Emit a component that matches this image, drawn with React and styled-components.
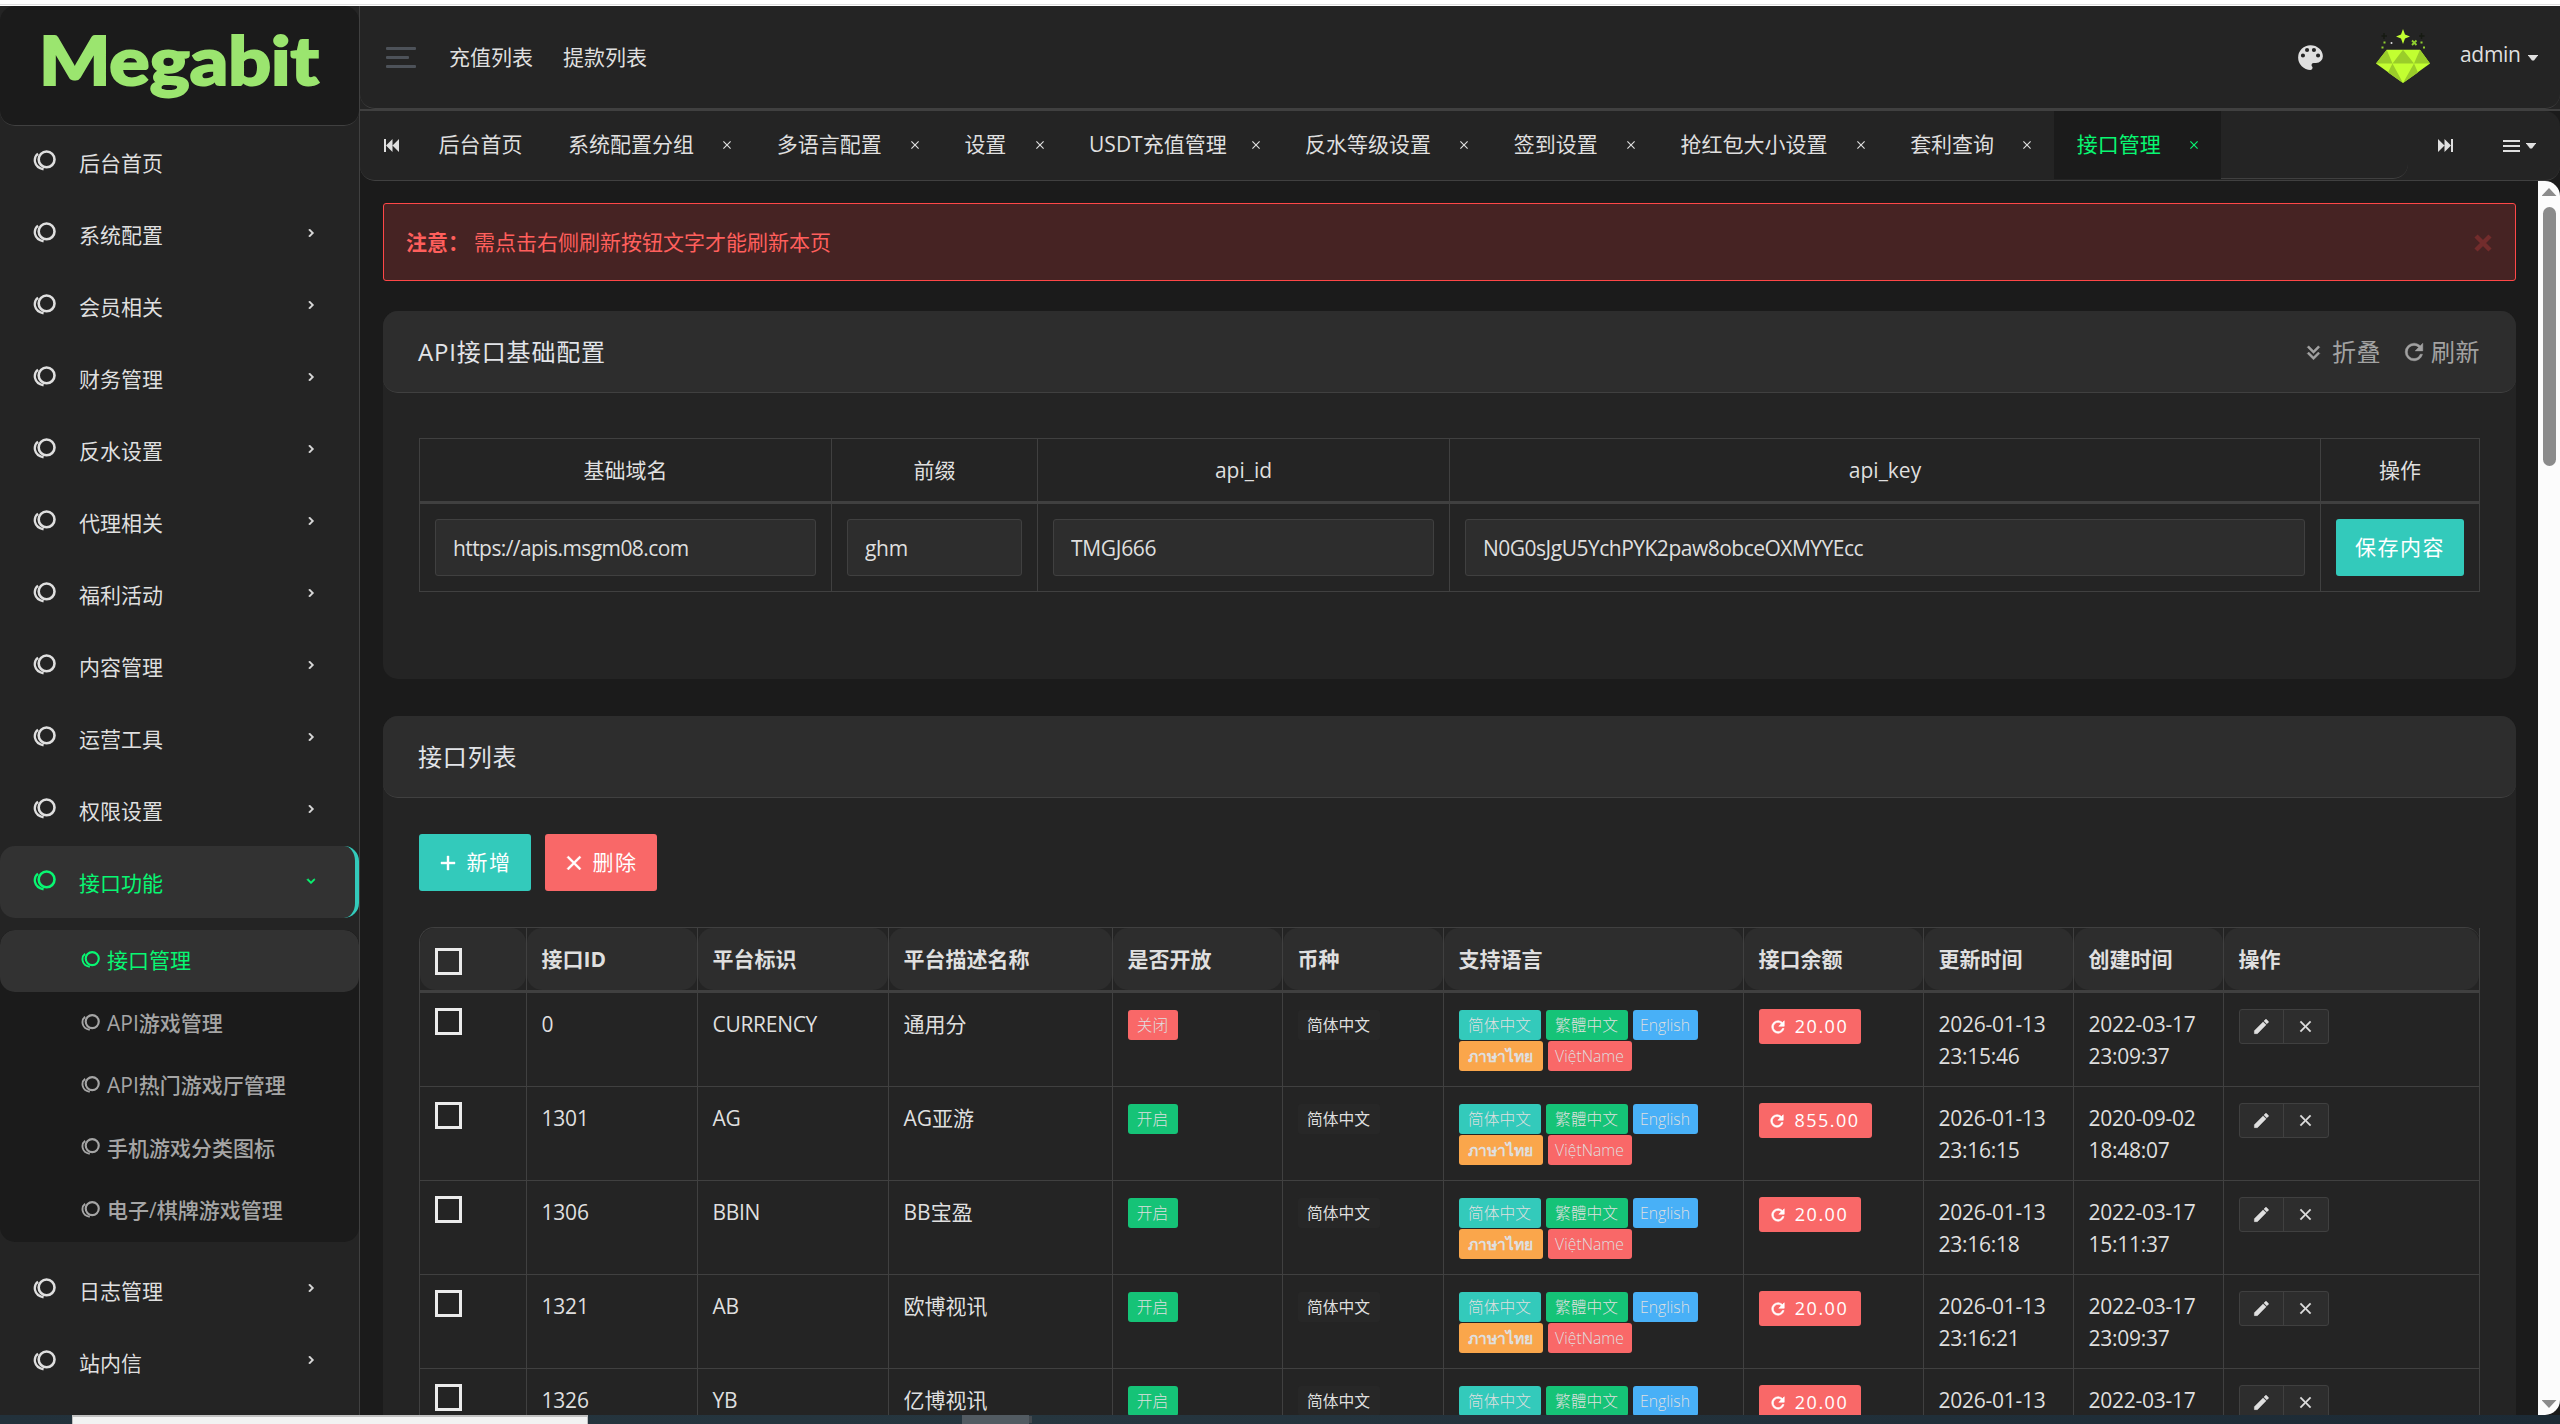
import React from "react";
import styled, { createGlobalStyle, css } from "styled-components";

const GlobalStyle = createGlobalStyle`
    * {
        box-sizing: border-box;
    }

    body {
        margin: 0;
        overflow: hidden;
        background: #1b1b1b;
        color: #dfdfdf;
        font-family: "Open Sans", "Noto Sans CJK SC", sans-serif;
        font-size: 21px;
        line-height: 31.5px;
    }

    svg {
        display: block;
        flex: none;
    }
`;

const Screen = styled.div`
    width: 2560px;
    height: 1424px;
    display: flex;
    flex-direction: column;
    overflow: hidden;
`;

const BrowserEdge = styled.div`
    height: 6px;
    flex: none;
    background: linear-gradient(#fff 0 4px, #dedede 4px 5px, #fff 5px);
`;

const Layout = styled.div`
    height: 1409px;
    flex: none;
    display: flex;
    overflow: hidden;
`;

const Taskbar = styled.div`
    height: 9px;
    flex: none;
    display: flex;
    padding-left: 72px;
    background: linear-gradient(90deg, #22313b, #26363f 40%, #1c2a35);
`;

const TaskPreview = styled.div`
    width: 516px;
    border: 1px solid #c0c0c0;
    border-top-width: 2px;
    border-bottom: 0;
    background: #f2f2f2;
`;

const TaskButton = styled.div`
    width: 67px;
    margin-left: 374px;
    background: #525b62;
    box-shadow: 4px 0 0 -1px #444a50;
`;

/* sidebar */

const Sidebar = styled.aside`
    width: 360px;
    flex: none;
    border-right: 1px solid #404040;
    background: #242424;
`;

const LogoBox = styled.div`
    height: 120px;
    border-bottom: 1px solid #404040;
    border-radius: 15px;
    background: #1b1b1b;
`;

const NavItem = styled.div`
    height: 72px;
    display: flex;
    align-items: center;
    padding: 0 40px 0 33px;
    color: #dfdfdf;

    ${(props) => props.$active && css`
        padding-right: 36px;
        border-right: 4px solid #33cabb;
        border-radius: 15px;
        background: #323232;
        color: #08f772;
    `}
`;

const NavIcon = styled.span`
    width: 46px;
    padding-bottom: 3px;
`;

const NavText = styled.span`
    flex: 1;
    padding-top: 3px;
`;

const NavArrow = styled.span`
    padding-bottom: 3px;
`;

const SubNav = styled.div`
    margin: 12px 0;
    border-radius: 15px;
    background: #1b1b1b;
    overflow: hidden;
`;

const SubItem = styled.div`
    height: 62.4px;
    display: flex;
    align-items: center;
    gap: 7px;
    padding-left: 81px;
    border-radius: 15px;
    font-weight: ${(props) => (props.$active ? 400 : 500)};
    color: ${(props) => (props.$active ? "#08f772" : "#a5a5a5")};
    background: ${(props) => (props.$active ? "#323232" : "transparent")};

    svg {
        margin-bottom: 3px;
    }
`;

/* header */

const Main = styled.div`
    width: 2200px;
    display: flex;
    flex-direction: column;
`;

const HeaderWrap = styled.div`
    height: 105px;
    flex: none;
    border-bottom: 2px solid #404040;
    background: #242424;
`;

const Header = styled.header`
    height: 103px;
    display: flex;
    align-items: center;
    padding: 1px 22px 0 26px;
    border-bottom: 1px solid #404040;
    border-radius: 0 0 15px 15px;
`;

const HeaderLinks = styled.nav`
    display: flex;
    gap: 30px;
    flex: 1;
    margin-left: 33px;
    padding-top: 1px;
`;

const Avatar = styled.div`
    margin: 0 30px 3px 49px;
`;

const UserName = styled.span`
    width: 58px;
    margin-right: 10px;
    padding-bottom: 5px;
    letter-spacing: -0.3px;
`;

const Caret = styled.span`
    width: 10px;
    height: 6px;
    flex: none;
    background: #dfdfdf;
    clip-path: polygon(0 0, 100% 0, 100% 12%, 60% 100%, 40% 100%, 0 12%);
`;

const TabBar = styled.div`
    height: 70px;
    flex: none;
    display: flex;
    align-items: center;
    padding: 0 24px;
    border-bottom: 1px solid #404040;
    border-radius: 0 15px 15px 15px;
    background: #242424;
`;

const TabList = styled.div`
    width: 1993px;
    height: 68px;
    margin: 0 30px 1px 17px;
    display: flex;
    border-bottom: 1px solid #404040;
    border-radius: 15px;
`;

const Tab = styled.div`
    width: ${(props) => props.$width}px;
    height: 68px;
    flex: none;
    display: flex;
    align-items: center;
    justify-content: space-between;
    padding: 0 23px 0 22.5px;
    white-space: nowrap;
    background: ${(props) => (props.$active ? "#1b1b1b" : "#242424")};
    color: ${(props) => (props.$active ? "#08f772" : "#dfdfdf")};
`;

const TabMenu = styled.div`
    display: flex;
    align-items: center;
    gap: 6px;
    margin-left: 50px;
`;

/* content */

const Body = styled.div`
    flex: 1;
    min-height: 0;
    display: flex;
`;

const Content = styled.main`
    flex: 1;
    padding: 22px 22px 0 23px;
    overflow: hidden;
`;

const ScrollTrack = styled.div`
    width: 22px;
    display: flex;
    flex-direction: column;
    align-items: center;
    padding: 7px 0;
    border-radius: 0 15px 15px 0;
    background: #fcfcfc;
`;

const ScrollArrow = styled.span`
    width: 15px;
    height: 8px;
    background: #8b8b8b;
    clip-path: ${(props) => (props.$down ? "polygon(0 0, 100% 0, 50% 100%)" : "polygon(50% 0, 100% 100%, 0 100%)")};
`;

const ScrollThumb = styled.span`
    width: 13px;
    height: 259px;
    margin: 11px 0 auto;
    border-radius: 7px;
    background: #8b8b8b;
`;

const Alert = styled.div`
    height: 78px;
    display: flex;
    align-items: center;
    padding: 2px 20px 0 22px;
    border: 1px solid #ff4747;
    border-radius: 3px;
    background: #462323;
    color: #ff5f5c;
`;

const AlertText = styled.span`
    flex: 1;
    margin-left: 5px;
`;

const Card = styled.section`
    height: ${(props) => props.$height}px;
    margin-top: ${(props) => props.$top}px;
    border-radius: 15px;
    background: #242424;
`;

const CardHeader = styled.div`
    height: 82px;
    display: flex;
    align-items: center;
    gap: 22px;
    padding: 1px 36px 0 35px;
    border-bottom: 1px solid #404040;
    border-radius: 15px;
    background: #2d2d2d;
`;

const CardTitle = styled.h4`
    flex: 1;
    margin: 0;
    font-size: 24px;
    font-weight: 400;
    letter-spacing: 0.85px;
    color: #e2e4e8;
`;

const CardAction = styled.span`
    display: flex;
    align-items: center;
    gap: 6px;
    font-size: 24px;
    letter-spacing: 0.5px;
    color: #a2a2a2;
`;

const CardBody = styled.div`
    padding: ${(props) => props.$top}px 36px 0;
`;

const Table = styled.table`
    width: 2061px;
    table-layout: fixed;
    border-collapse: separate;
    border-spacing: 0;
    border: 1px solid #404040;
    border-right: 0;
    border-bottom: 0;
    border-radius: ${(props) => (props.$round ? "15px 15px 0 0" : "0")};
`;

const cell = css`
    border-right: 1px solid #404040;
    text-align: left;
    vertical-align: top;
`;

const ConfigHead = styled.th`
    ${cell}
    height: 65px;
    padding: 2px 0 0;
    border-bottom: 3px solid #404040;
    text-align: center;
    vertical-align: middle;
    font-weight: 400;
`;

const ConfigCell = styled.td`
    ${cell}
    height: 88px;
    padding: 15px;
    border-bottom: 1px solid #404040;
`;

const Input = styled.input`
    width: 100%;
    height: 57px;
    display: block;
    padding: 1px 17px 0;
    border: 1px solid #404040;
    border-radius: 3px;
    background: #2d2d2d;
    color: #dfdfdf;
    font: inherit;
    letter-spacing: ${(props) => props.$spacing || -0.3}px;
`;

const Button = styled.button`
    width: ${(props) => props.$width}px;
    height: 57px;
    display: flex;
    align-items: center;
    justify-content: center;
    gap: 10px;
    padding: 1px 0 0;
    border: none;
    border-radius: 3px;
    background: ${(props) => props.$color};
    color: #fff;
    font: inherit;
    letter-spacing: 1.5px;
`;

const Toolbar = styled.div`
    display: flex;
    gap: 14px;
    margin-bottom: 36px;
`;

const HeadCell = styled.th`
    height: 65px;
    padding: 0;
    border-right: 1px solid #404040;
    border-bottom: 3px solid #404040;
    text-align: left;
    font-weight: 700;
`;

const HeadInner = styled.div`
    height: 62px;
    display: flex;
    align-items: center;
    padding: 2px 15px 0 14.5px;
    border-radius: 15px;
    background: #2d2d2d;
`;

const Cell = styled.td`
    ${cell}
    height: 94px;
    padding: 16px 12px 0 14.5px;
    border-bottom: 1px solid #404040;
    letter-spacing: ${(props) => props.$spacing || 0}px;
`;

const Checkbox = styled.span`
    width: 27px;
    height: 27px;
    display: block;
    margin-top: ${(props) => props.$top || 0}px;
    border: 3px solid #ebebeb;
`;

const BadgeList = styled.div`
    display: flex;
    flex-wrap: wrap;
    gap: 1px 5px;
    padding-top: 1px;
`;

const Badge = styled.span`
    width: ${(props) => props.$width}px;
    height: 30px;
    display: flex;
    align-items: center;
    justify-content: center;
    padding-top: 1px;
    border-radius: 3px;
    background: ${(props) => props.$color};
    color: #dfdfdf;
    font-size: 15.75px;
    font-weight: ${(props) => props.$weight || 300};
    line-height: 29px;
    white-space: nowrap;
`;

const BalanceButton = styled(Button)`
    height: 35px;
    padding: 0;
    font-size: 18px;
`;

const ActionGroup = styled.div`
    width: 90px;
    height: 35px;
    display: flex;
    border: 1px solid #404040;
    border-radius: 3px;
    background: #2d2d2d;
`;

const ActionButton = styled.span`
    flex: 1;
    display: flex;
    align-items: center;
    justify-content: center;

    & + & {
        border-left: 1px solid #404040;
    }
`;

const paths = {
    close: "M19,6.41L17.59,5L12,10.59L6.41,5L5,6.41L10.59,12L5,17.59L6.41,19L12,13.41L17.59,19L19,17.59L13.41,12L19,6.41Z",
    plus: "M19,13H13V19H11V13H5V11H11V5H13V11H19V13Z",
    pencil: "M20.71,7.04C21.1,6.65 21.1,6 20.71,5.63L18.37,3.29C18,2.9 17.35,2.9 16.96,3.29L15.12,5.12L18.87,8.87M3,17.25V21H6.75L17.81,9.93L14.06,6.18L3,17.25Z",
    refresh: "M17.65,6.35C16.2,4.9 14.21,4 12,4A8,8 0 0,0 4,12A8,8 0 0,0 12,20C15.73,20 18.84,17.45 19.73,14H17.65C16.83,16.33 14.61,18 12,18A6,6 0 0,1 6,12A6,6 0 0,1 12,6C13.66,6 15.14,6.69 16.22,7.78L13,11H20V4L17.65,6.35Z",
    palette: "M17.5,12A1.5,1.5 0 0,1 16,10.5A1.5,1.5 0 0,1 17.5,9A1.5,1.5 0 0,1 19,10.5A1.5,1.5 0 0,1 17.5,12M14.5,8A1.5,1.5 0 0,1 13,6.5A1.5,1.5 0 0,1 14.5,5A1.5,1.5 0 0,1 16,6.5A1.5,1.5 0 0,1 14.5,8M9.5,8A1.5,1.5 0 0,1 8,6.5A1.5,1.5 0 0,1 9.5,5A1.5,1.5 0 0,1 11,6.5A1.5,1.5 0 0,1 9.5,8M6.5,12A1.5,1.5 0 0,1 5,10.5A1.5,1.5 0 0,1 6.5,9A1.5,1.5 0 0,1 8,10.5A1.5,1.5 0 0,1 6.5,12M12,3A9,9 0 0,0 3,12A9,9 0 0,0 12,21A1.5,1.5 0 0,0 13.5,19.5C13.5,19.11 13.35,18.76 13.11,18.5C12.88,18.23 12.73,17.88 12.73,17.5A1.5,1.5 0 0,1 14.23,16H16A5,5 0 0,0 21,11C21,6.58 16.97,3 12,3Z",
    doubleDown: "M16.59,5.59L18,7L12,13L6,7L7.41,5.59L12,10.17L16.59,5.59M16.59,11.59L18,13L12,19L6,13L7.41,11.59L12,16.17L16.59,11.59Z",
    right: "M8.59,16.58L13.17,12L8.59,7.41L10,6L16,12L10,18L8.59,16.58Z",
    down: "M7.41,8.58L12,13.17L16.59,8.58L18,10L12,16L6,10L7.41,8.58Z",
};

// box cuts the 24px grid down to the part that holds the glyph
const Icon = ({ name, size, box = "0 0 24 24", bold }) => (
    <svg width={size} height={size} viewBox={box} fill="currentColor" stroke="currentColor" strokeWidth={bold || 0}>
        <path d={paths[name]} />
    </svg>
);

const Rings = ({ size }) => (
    <svg width={size} height={size} viewBox="0 0 23 23" fill="none" stroke="currentColor">
        <circle cx="13.6" cy="10.4" r="7.9" strokeWidth="2.6" />
        <path d="M5 4.6C0.2 8.4 0 18.2 10.6 20.4" strokeWidth="2.3" />
    </svg>
);

const Logo = () => (
    <svg width="359" height="119" viewBox="0 0 359 119">
        <text x="39" y="79" fill="#9be56f" fontFamily="Lato" fontWeight="900" fontSize="67" textLength="280" lengthAdjust="spacingAndGlyphs" stroke="#9be56f" strokeWidth="2">Megabit</text>
    </svg>
);

const Burger = () => (
    <svg width="30" height="22" viewBox="0 0 30 22" fill="#4d5259">
        <rect y="0" width="30" height="3" rx="1" />
        <rect y="9" width="23" height="3" rx="1" />
        <rect y="18" width="30" height="3" rx="1" />
    </svg>
);

const Diamond = () => (
    <svg width="54" height="54" viewBox="0 0 54 54">
        <path d="M10.7 20.7H44L54 34.5L27 54L0 34.5Z" fill="#c2ff31" />
        <path d="M10.7 20.7L0 34.5H16.5ZM27 20.7L16.5 34.5H38ZM44 20.7L54 34.5H38ZM16.5 34.5L27 54L12 43.5ZM38 34.5L27 54L42 43.5Z" fill="#9acd2a" />
        <path d="M27 0L29 5.5L34 7.5L29 9.5L27 15L25 9.5L20 7.5L25 5.5Z" fill="#c2ff31" />
        <path d="M36 11.5L40.5 16M40.5 11.5L36 16" stroke="#8fd02f" strokeWidth="1.8" />
        <path d="M8 4V10M5.5 7H11M45.500 4V10M43 7H48.5" stroke="#161a12" strokeWidth="1.5" />
        <circle cx="15.5" cy="14" r="1" fill="#dfdfdf" />
        <path d="M7.500 12.500h2v2h-2zM5.500 17.500h2v2h-2zM44.500 12.500h2v2h-2zM47 17.500h2v2h-2z" fill="#8fd02f" />
    </svg>
);

const SkipIcon = ({ flip }) => (
    <svg width="15" height="13" viewBox="0 0 15 13" fill="#dfdfdf">
        <path
            d="M0 0H2V13H0ZM8.500 0V13L2 6.500ZM15 0V13L8.500 6.500Z"
            transform={flip ? "translate(15 0) scale(-1 1)" : undefined}
        />
    </svg>
);

const BarsIcon = () => (
    <svg width="17" height="12" viewBox="0 0 17 12" fill="#dfdfdf">
        <path d="M0 0H17V2H0ZM0 5H17V7H0ZM0 10H17V12H0Z" />
    </svg>
);

const menu = ["后台首页", "系统配置", "会员相关", "财务管理", "反水设置", "代理相关", "福利活动", "内容管理", "运营工具", "权限设置"];
const subMenu = ["接口管理", "API游戏管理", "API热门游戏厅管理", "手机游戏分类图标", "电子/棋牌游戏管理"];
const bottomMenu = ["日志管理", "站内信"];

const tabs = [
    { name: "后台首页", width: 129.5 },
    { name: "系统配置分组", width: 208.7 },
    { name: "多语言配置", width: 187.7 },
    { name: "设置", width: 124.7 },
    { name: "USDT充值管理", width: 216 },
    { name: "反水等级设置", width: 208.7 },
    { name: "签到设置", width: 166.7 },
    { name: "抢红包大小设置", width: 229.7 },
    { name: "套利查询", width: 166.7 },
    { name: "接口管理", width: 167 },
];

const config = [
    { name: "基础域名", value: "https://apis.msgm08.com", width: 412, spacing: -0.58 },
    { name: "前缀", value: "ghm", width: 206 },
    { name: "api_id", value: "TMGJ666", width: 412 },
    { name: "api_key", value: "N0G0sJgU5YchPYK2paw8obceOXMYYEcc", width: 871, spacing: -0.5 },
];

const columns = [
    { name: "", width: 107 },
    { name: "接口ID", width: 171 },
    { name: "平台标识", width: 191 },
    { name: "平台描述名称", width: 224 },
    { name: "是否开放", width: 170 },
    { name: "币种", width: 161 },
    { name: "支持语言", width: 300 },
    { name: "接口余额", width: 180 },
    { name: "更新时间", width: 150 },
    { name: "创建时间", width: 150 },
    { name: "操作", width: 256 },
];

const rows = [
    { id: "0", code: "CURRENCY", name: "通用分", open: false, balance: "20.00", updated: "2026-01-13 23:15:46", created: "2022-03-17 23:09:37" },
    { id: "1301", code: "AG", name: "AG亚游", open: true, balance: "855.00", updated: "2026-01-13 23:16:15", created: "2020-09-02 18:48:07" },
    { id: "1306", code: "BBIN", name: "BB宝盈", open: true, balance: "20.00", updated: "2026-01-13 23:16:18", created: "2022-03-17 15:11:37" },
    { id: "1321", code: "AB", name: "欧博视讯", open: true, balance: "20.00", updated: "2026-01-13 23:16:21", created: "2022-03-17 23:09:37" },
    { id: "1326", code: "YB", name: "亿博视讯", open: true, balance: "20.00", updated: "2026-01-13 23:16:24", created: "2022-03-17 23:09:37" },
];

const NavRow = ({ name, arrow, active }) => (
    <NavItem $active={active}>
        <NavIcon><Rings size={23} /></NavIcon>
        <NavText>{name}</NavText>
        {arrow && <NavArrow><Icon name={arrow} size={16} bold={1} /></NavArrow>}
    </NavItem>
);

const InterfaceRow = ({ row }) => (
    <tr>
        <Cell><Checkbox $top={-1} /></Cell>
        <Cell $spacing={-0.2}>{row.id}</Cell>
        <Cell $spacing={-0.3}>{row.code}</Cell>
        <Cell>{row.name}</Cell>
        <Cell>
            <BadgeList>
                <Badge $width={50} $color={row.open ? "#15c377" : "#f96868"}>{row.open ? "开启" : "关闭"}</Badge>
            </BadgeList>
        </Cell>
        <Cell>
            <BadgeList>
                <Badge $width={82} $color="#272727" $weight={400}>简体中文</Badge>
            </BadgeList>
        </Cell>
        <Cell>
            <BadgeList>
                <Badge $width={82} $color="#33cabb">简体中文</Badge>
                <Badge $width={82} $color="#15c377">繁體中文</Badge>
                <Badge $width={65} $color="#48b0f7">English</Badge>
                <Badge $width={84} $color="#faa64b" $weight={600}>ภาษาไทย</Badge>
                <Badge $width={84} $color="#f96868">ViệtName</Badge>
            </BadgeList>
        </Cell>
        <Cell>
            <BalanceButton $width={row.balance.length > 5 ? 113 : 102} $color="#f96868">
                <Icon name="refresh" size={14} box="3 3 18 18" bold={0.8} />
                {row.balance}
            </BalanceButton>
        </Cell>
        <Cell $spacing={-0.25}>{row.updated}</Cell>
        <Cell $spacing={-0.25}>{row.created}</Cell>
        <Cell>
            <ActionGroup>
                <ActionButton><Icon name="pencil" size={19} bold={0.6} /></ActionButton>
                <ActionButton><Icon name="close" size={19} bold={0.5} /></ActionButton>
            </ActionGroup>
        </Cell>
    </tr>
);

const App = () => {
    return (
        <Screen>
            <GlobalStyle />
            <BrowserEdge />
            <Layout>
                <Sidebar>
                    <LogoBox><Logo /></LogoBox>
                    {menu.map((name, i) => (
                        <NavRow key={name} name={name} arrow={i > 0 && "right"} />
                    ))}
                    <NavRow name="接口功能" arrow="down" active />
                    <SubNav>
                        {subMenu.map((name, i) => (
                            <SubItem key={name} $active={i === 0}>
                                <Rings size={19} />
                                {name}
                            </SubItem>
                        ))}
                    </SubNav>
                    {bottomMenu.map((name) => (
                        <NavRow key={name} name={name} arrow="right" />
                    ))}
                </Sidebar>

                <Main>
                    <HeaderWrap>
                        <Header>
                            <Burger />
                            <HeaderLinks>
                                <span>充值列表</span>
                                <span>提款列表</span>
                            </HeaderLinks>
                            <Icon name="palette" size={33} />
                            <Avatar><Diamond /></Avatar>
                            <UserName>admin</UserName>
                            <Caret />
                        </Header>
                    </HeaderWrap>

                    <TabBar>
                        <SkipIcon />
                        <TabList>
                            {tabs.map((tab, i) => (
                                <Tab key={tab.name} $width={tab.width} $active={i === tabs.length - 1}>
                                    {tab.name}
                                    {i > 0 && <Icon name="close" size={8} box="5 5 14 14" />}
                                </Tab>
                            ))}
                        </TabList>
                        <SkipIcon flip />
                        <TabMenu>
                            <BarsIcon />
                            <Caret />
                        </TabMenu>
                    </TabBar>

                    <Body>
                        <Content>
                            <Alert>
                                <strong>注意：</strong>
                                <AlertText>需点击右侧刷新按钮文字才能刷新本页</AlertText>
                                <svg width="24" height="24" viewBox="0 0 24 24" stroke="#722c2c" strokeWidth="4.5">
                                    <path d="M5 5L19 19M19 5L5 19" />
                                </svg>
                            </Alert>

                            <Card $height={368} $top={30}>
                                <CardHeader>
                                    <CardTitle>API接口基础配置</CardTitle>
                                    <CardAction><Icon name="doubleDown" size={25} bold={0.5} />折叠</CardAction>
                                    <CardAction><Icon name="refresh" size={22} box="2 2 20 20" bold={0.4} />刷新</CardAction>
                                </CardHeader>
                                <CardBody $top={45}>
                                    <Table>
                                        <colgroup>
                                            {config.map((item) => <col key={item.name} width={item.width} />)}
                                            <col width={159} />
                                        </colgroup>
                                        <thead>
                                            <tr>
                                                {config.map((item) => <ConfigHead key={item.name}>{item.name}</ConfigHead>)}
                                                <ConfigHead>操作</ConfigHead>
                                            </tr>
                                        </thead>
                                        <tbody>
                                            <tr>
                                                {config.map((item) => (
                                                    <ConfigCell key={item.name}>
                                                        <Input defaultValue={item.value} $spacing={item.spacing} />
                                                    </ConfigCell>
                                                ))}
                                                <ConfigCell>
                                                    <Button $width={128} $color="#33cabb">保存内容</Button>
                                                </ConfigCell>
                                            </tr>
                                        </tbody>
                                    </Table>
                                </CardBody>
                            </Card>

                            <Card $height={900} $top={37}>
                                <CardHeader>
                                    <CardTitle>接口列表</CardTitle>
                                </CardHeader>
                                <CardBody $top={36}>
                                    <Toolbar>
                                        <Button $width={112} $color="#33cabb">
                                            <Icon name="plus" size={18} box="3 3 18 18" bold={0.4} />新增
                                        </Button>
                                        <Button $width={112} $color="#f96868">
                                            <Icon name="close" size={18} box="3 3 18 18" bold={0.4} />删除
                                        </Button>
                                    </Toolbar>
                                    <Table $round>
                                        <colgroup>
                                            {columns.map((col, i) => <col key={i} width={col.width} />)}
                                        </colgroup>
                                        <thead>
                                            <tr>
                                                {columns.map((col, i) => (
                                                    <HeadCell key={i}>
                                                        <HeadInner>{col.name || <Checkbox $top={2} />}</HeadInner>
                                                    </HeadCell>
                                                ))}
                                            </tr>
                                        </thead>
                                        <tbody>
                                            {rows.map((row) => <InterfaceRow key={row.id} row={row} />)}
                                        </tbody>
                                    </Table>
                                </CardBody>
                            </Card>
                        </Content>
                        <ScrollTrack>
                            <ScrollArrow />
                            <ScrollThumb />
                            <ScrollArrow $down />
                        </ScrollTrack>
                    </Body>
                </Main>
            </Layout>
            <Taskbar>
                <TaskPreview />
                <TaskButton />
            </Taskbar>
        </Screen>
    );
};

export default App;
